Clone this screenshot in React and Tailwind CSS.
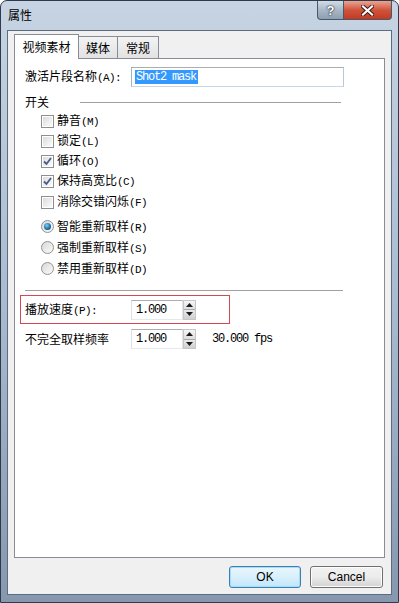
import React from "react";

const zh = { fontFamily: '"Noto Sans CJK SC", "Noto Sans", sans-serif' };
const mono = { fontFamily: '"Liberation Mono", "DejaVu Sans Mono", monospace' };

// latin bits in the labels use a narrow monospace, like SimSun half-width
function M({ children }) {
  return (
    <span className="text-[11px] tracking-[-0.6px]" style={mono}>
      {children}
    </span>
  );
}

function Checkbox({ checked }) {
  return (
    <span className="w-[13px] h-[13px] border border-[#8e8f8f] bg-white p-[1px] flex shrink-0">
      <span className="flex-1 flex items-center justify-center bg-gradient-to-br from-[#dcdcdc] to-[#fbfbfb]">
        {checked && (
          <svg width="9" height="9" viewBox="0 0 9 9">
            <path d="M1 4.5 L3.5 7 L8 1" fill="none" stroke="#4a5c8c" strokeWidth="1.8" />
          </svg>
        )}
      </span>
    </span>
  );
}

function Radio({ checked }) {
  return (
    <span className="w-[13px] h-[13px] rounded-full border border-[#929292] bg-gradient-to-br from-[#d8d8d8] to-[#fbfbfb] flex items-center justify-center shrink-0">
      {checked && (
        <span className="w-[7px] h-[7px] rounded-full bg-[radial-gradient(circle_at_40%_35%,#7ad0f5,#1b6aa0_60%,#0f3e66)]" />
      )}
    </span>
  );
}

function CheckRow({ checked, label, k, className = "" }) {
  return (
    <div className={"h-[20px] flex items-center pl-[26px] gap-[3px] " + className}>
      <Checkbox checked={checked} />
      <span className="text-[12px] text-black leading-none" style={zh}>
        {label}
        <M>({k})</M>
      </span>
    </div>
  );
}

function RadioRow({ checked, label, k }) {
  return (
    <div className="h-[21px] flex items-center pl-[26px] gap-[3px]">
      <Radio checked={checked} />
      <span className="text-[12px] text-black leading-none" style={zh}>
        {label}
        <M>({k})</M>
      </span>
    </div>
  );
}

function Spin({ value }) {
  return (
    <div className="flex h-[20px]">
      <div className="w-[52px] h-full bg-white border border-[#abadb3] border-l-[#dbdfe6] border-b-[#e3e9ef] border-r-[#e2e3ea] flex items-center pl-[4px]">
        <span className="text-[12px] tracking-[-1.2px] text-black" style={mono}>{value}</span>
      </div>
      <div className="w-[13px] h-full flex flex-col border border-[#c6c6c6] bg-[#f4f4f4]">
        <div className="flex-1 flex items-center justify-center border-b border-[#a8a8a8] bg-gradient-to-b from-[#f6f6f6] to-[#dedede]">
          <svg width="7" height="4" viewBox="0 0 7 4"><path d="M0 4 L3.5 0 L7 4 Z" fill="#1a1a1a" /></svg>
        </div>
        <div className="flex-1 flex items-center justify-center bg-gradient-to-b from-[#e9e9e9] to-[#cfcfcf]">
          <svg width="7" height="4" viewBox="0 0 7 4"><path d="M0 0 L7 0 L3.5 4 Z" fill="#1a1a1a" /></svg>
        </div>
      </div>
    </div>
  );
}

export default function App() {
  return (
    <div className="w-[399px] h-[603px] flex flex-col rounded-t-[7px] border border-[#2f3b4a] bg-gradient-to-b from-[#c6d4e3] via-[#a9bbcf] to-[#8598ae] overflow-hidden">
      {/* Title bar */}
      <div className="h-[29px] flex items-start justify-between shrink-0">
        <span className="pl-[7px] pt-[5px] text-[12px] text-black" style={zh}>属性</span>
        <div className="flex mr-[6px]">
          <div className="w-[27px] h-[19px] border border-[#48586b] border-t-0 rounded-bl-[4px] bg-gradient-to-b from-[#d2dce6] via-[#a9b8c7] to-[#8e9fb1] flex items-center justify-center">
            <span className="text-white font-bold text-[13px] leading-none [text-shadow:0_0_2px_#0d1a26,0_0_1px_#0d1a26]" style={{ fontFamily: '"Liberation Sans", sans-serif' }}>?</span>
          </div>
          <div className="w-[48px] h-[19px] border border-[#48586b] border-l-0 border-t-0 rounded-br-[4px] bg-gradient-to-b from-[#e8a493] via-[#d0533c] to-[#c33a20] flex items-center justify-center">
            <svg width="13" height="11" viewBox="0 0 13 11">
              <path d="M2 1.5 L11 9.5 M11 1.5 L2 9.5" stroke="#3a1a14" strokeWidth="4" strokeLinecap="square" />
              <path d="M2 1.5 L11 9.5 M11 1.5 L2 9.5" stroke="#ffffff" strokeWidth="2.2" strokeLinecap="square" />
            </svg>
          </div>
        </div>
      </div>

      {/* Client area */}
      <div className="flex-1 mx-[6px] mb-[7px] border border-[#5c6d82] bg-[#f0f0f0] flex flex-col pt-[3px] px-[6px] pb-[6px]">
        {/* Tabs */}
        <div className="h-[24px] flex items-end shrink-0">
          <div className="w-[65px] h-[25px] -mb-[1px] relative z-10 bg-white border border-[#898c95] border-b-0 flex items-center justify-center">
            <span className="text-[12px] text-black" style={zh}>视频素材</span>
          </div>
          <div className="w-[39px] h-[22px] bg-gradient-to-b from-[#f3f3f3] to-[#e2e2e2] border border-[#898c95] border-l-0 border-b-0 flex items-center justify-center">
            <span className="text-[12px] text-black" style={zh}>媒体</span>
          </div>
          <div className="w-[41px] h-[22px] bg-gradient-to-b from-[#f3f3f3] to-[#e2e2e2] border border-[#898c95] border-l-0 border-b-0 flex items-center justify-center">
            <span className="text-[12px] text-black" style={zh}>常规</span>
          </div>
        </div>

        {/* Panel */}
        <div className="flex-1 bg-white border border-[#898c95] flex flex-col">
          <div className="mt-[8px] h-[20px] flex items-center pl-[10px]">
            <span className="w-[106px] text-[12px] text-black" style={zh}>
              激活片段名称<M>(A):</M>
            </span>
            <div className="w-[213px] h-[20px] bg-white border border-[#abadb3] border-l-[#a0b4c8] border-b-[#c9d6e3] border-r-[#b8c8d8] flex items-center pl-[3px]">
              <span className="bg-[#3399ff] text-white text-[12px] tracking-[-1.2px] leading-[14px] pl-[1px] pr-[2px]" style={mono}>Shot2 mask</span>
            </div>
          </div>

          <div className="mt-[7px] h-[16px] flex items-center pl-[10px]">
            <span className="text-[12px] text-black" style={zh}>开关</span>
            <div className="ml-[31px] w-[261px] h-px bg-[#a0a0a0]" />
          </div>

          <div className="mt-[1px]">
            <CheckRow label="静音" k="M" />
            <CheckRow label="锁定" k="L" />
            <CheckRow checked label="循环" k="O" />
            <CheckRow checked label="保持高宽比" k="C" />
            <CheckRow label="消除交错闪烁" k="F" className="mt-[1px]" />
          </div>

          <div className="mt-[4px]">
            <RadioRow checked label="智能重新取样" k="R" />
            <RadioRow label="强制重新取样" k="S" />
            <RadioRow label="禁用重新取样" k="D" />
          </div>

          <div className="mt-[11px] ml-[10px] w-[318px] h-px bg-[#a0a0a0]" />

          <div className="mt-[4px] ml-[5px] w-[210px] h-[29px] border border-[#d4484f] flex items-center pl-[4px]">
            <span className="w-[106px] text-[12px] text-black" style={zh}>
              播放速度<M>(P):</M>
            </span>
            <Spin value="1.000" />
          </div>

          <div className="mt-[5px] h-[20px] flex items-center pl-[10px]">
            <span className="w-[106px] text-[12px] text-black" style={zh}>不完全取样频率</span>
            <Spin value="1.000" />
            <span className="ml-[16px] text-[12px] tracking-[-1.2px] text-black" style={mono}>30.000 fps</span>
          </div>
        </div>

        {/* Buttons */}
        <div className="mt-[8px] flex justify-end gap-[9px] pr-[2px] shrink-0">
          <button className="w-[72px] h-[22px] rounded-[3px] border border-[#3c7fb1] bg-gradient-to-b from-[#eaf6fd] via-[#d9f0fc] to-[#bee6fd] shadow-[inset_0_0_0_1px_#a6dcf8] text-[12px] text-black" style={{ fontFamily: '"Liberation Sans", sans-serif' }}>
            OK
          </button>
          <button className="w-[73px] h-[22px] rounded-[3px] border border-[#707070] bg-gradient-to-b from-[#f2f2f2] via-[#ebebeb] to-[#d3d3d3] shadow-[inset_0_0_0_1px_#fcfcfc] text-[12px] text-black" style={{ fontFamily: '"Liberation Sans", sans-serif' }}>
            Cancel
          </button>
        </div>
      </div>
    </div>
  );
}
